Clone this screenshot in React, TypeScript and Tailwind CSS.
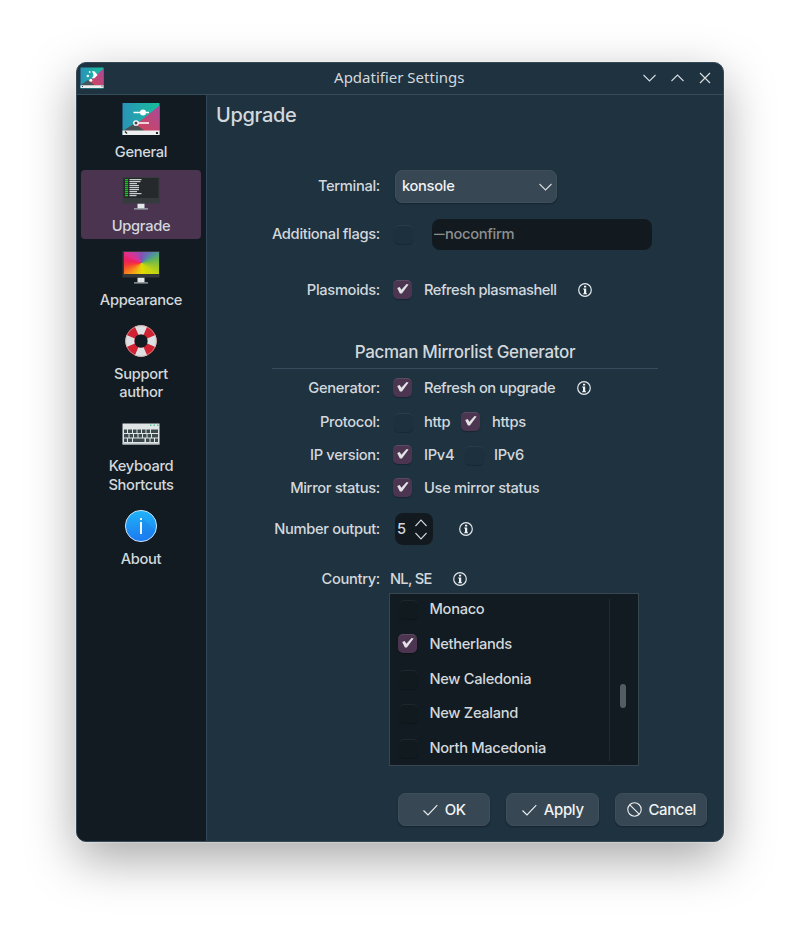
import type { ReactNode } from "react";

function GeneralIcon() {
  return (
    <svg width="40" height="46" viewBox="0 0 40 46">
      <defs>
        <linearGradient id="gBlue" x1="0" y1="0" x2="1" y2="0">
          <stop offset="0" stopColor="#2a93b8" />
          <stop offset="1" stopColor="#16bf9c" />
        </linearGradient>
        <linearGradient id="gPink" x1="0" y1="1" x2="1" y2="0">
          <stop offset="0" stopColor="#d8434f" />
          <stop offset="1" stopColor="#a54a9c" />
        </linearGradient>
      </defs>
      <rect x="1.500" y="7" width="37" height="32" fill="url(#gBlue)" />
      <path d="M38.5 9.500V35H9L17 27Z" fill="url(#gPink)" />
      <path d="M1.500 35L13.500 27.500L24 35Z" fill="#4a5154" />
      <rect x="1.500" y="34.500" width="37" height="4.500" fill="#eceeef" />
      <path d="M4 35.500l2 2" stroke="#222" strokeWidth="1.200" />
      <rect x="35" y="36" width="2" height="2" fill="#222" />
      <path d="M12.500 16.500H28M16.500 27H28" stroke="#fff" strokeWidth="1.400" />
      <circle cx="22" cy="16.500" r="3" fill="#fff" />
      <circle cx="15" cy="27" r="2.200" fill="#4a4650" stroke="#fff" strokeWidth="1.300" />
    </svg>
  );
}

function AppIcon() {
  return (
    <svg width="24" height="22" viewBox="0 0 24 22">
      <rect x="0.500" y="0.500" width="23" height="21" fill="url(#gBlue)" />
      <path d="M23.500 1.500V18.500H5L11 13Z" fill="url(#gPink)" />
      <path d="M0.500 18L8 13L15 18.500H0.500Z" fill="#44565b" />
      <rect x="0.500" y="18.300" width="23" height="2.700" fill="#eceeef" />
      <path d="M2 19l1 1M21.500 19.200h1" stroke="#333" strokeWidth="0.900" />
      <path d="M12 4.300h2.400L17.600 8L14.400 11.200H12L13.600 8Z" fill="#fff" />
      <circle cx="9.700" cy="5" r="0.900" fill="#fff" />
      <circle cx="7.800" cy="9" r="1.200" fill="#fff" />
      <circle cx="10.800" cy="13.300" r="1.500" fill="#fff" />
    </svg>
  );
}

function Stand() {
  return (
    <>
      <path d="M16.500 33.500h7v5h-7z" fill="#e3e7ea" />
      <path d="M13 38.300h14v1.200H13z" fill="#a5b1b5" />
    </>
  );
}

function TerminalIcon() {
  const widths = [12, 11, 7.500, 9.500, 9.500, 9.500, 7.500, 12, 7];
  return (
    <svg width="40" height="46" viewBox="0 0 40 46">
      <Stand />
      <rect x="1.500" y="7" width="37" height="26.500" rx="0.500" fill="#353a3d" />
      <rect x="2.500" y="8" width="35" height="20" fill="#25292b" />
      {widths.map((w, i) => (
        <g key={i}>
          <rect x="4" y={9 + i * 2} width="3" height="1.300" fill="#18c51c" />
          <rect x="8.500" y={9 + i * 2} width={w} height="1.200" fill="#c9cccd" />
        </g>
      ))}
    </svg>
  );
}

function AppearanceIcon() {
  return (
    <svg width="40" height="46" viewBox="0 0 40 46">
      <Stand />
      <rect x="1.500" y="7" width="37" height="26.500" rx="0.500" fill="#34383b" />
      <foreignObject x="2.500" y="8" width="35" height="21.500">
        <div className="h-full w-full bg-[conic-gradient(#8450b5,#5f78b0_40deg,#4f9b92_58deg,#6cb84c_80deg,#a0c82a_105deg,#c8d60e_130deg,#e0d904_170deg,#ebca0a_195deg,#f59a18_225deg,#f76a22_245deg,#f53a35_262deg,#ee1f5c_280deg,#e0308f_303deg,#b93fa6_330deg,#8450b5)]" />
      </foreignObject>
    </svg>
  );
}

function SupportIcon() {
  return (
    <svg width="40" height="46" viewBox="0 0 40 46">
      <circle cx="20" cy="23" r="11.200" fill="none" stroke="#cf2233" strokeWidth="9" />
      <circle
        cx="20"
        cy="23"
        r="11.200"
        fill="none"
        stroke="#dde1e4"
        strokeWidth="9"
        pathLength="360"
        strokeDasharray="46 44"
        strokeDashoffset="23"
      />
      <circle cx="20" cy="23" r="15.300" fill="none" stroke="#c8b6a8" strokeWidth="0.900" strokeOpacity="0.700" />
    </svg>
  );
}

function KeyboardIcon() {
  const row = (y: number, xs: [number, number][]) =>
    xs.map(([x, w]) => <rect key={`${x}-${y}`} x={x} y={y} width={w} height="3.500" fill="#3d4a4d" />);
  return (
    <svg width="40" height="46" viewBox="0 0 40 46">
      <rect x="1.500" y="12.500" width="37" height="21" fill="#dfe4e5" />
      <rect x="1.500" y="32.500" width="37" height="1" fill="#a3adaf" />
      {row(18.500, [[3, 3], [7, 4], [12, 3.500], [16.500, 3.500], [21, 3.500], [25.500, 3.500], [30, 7]])}
      {row(23, [[3, 4.500], [8.500, 3.500], [13, 3.500], [17.500, 3.500], [22, 3.500], [26.500, 3.500], [31, 6]])}
      {row(27.500, [[3, 3], [7, 4], [12, 11.500], [25, 3.500], [29.500, 3.500], [34, 3]])}
      <path d="M29 13.500h1.500v1.500H29zM32.500 13.500H34v1.500h-1.500zM36 13.500h1.500v1.500H36z" fill="#59c99a" />
    </svg>
  );
}

function AboutIcon() {
  return (
    <svg width="40" height="46" viewBox="0 0 40 46">
      <defs>
        <linearGradient id="gInfo" x1="0" y1="0" x2="0" y2="1">
          <stop offset="0" stopColor="#1fb4f8" />
          <stop offset="1" stopColor="#1c78f2" />
        </linearGradient>
      </defs>
      <circle cx="20" cy="23" r="15.600" fill="url(#gInfo)" stroke="#c3e0f6" strokeWidth="1" />
      <path d="M21 15L34 27L29 34L21 31Z" fill="#1767cc" fillOpacity="0.180" />
      <path d="M19 15h2v2h-2zM19 19h2v12h-2z" fill="#eef6fc" />
    </svg>
  );
}

function Info() {
  return (
    <svg width="14" height="14" viewBox="0 0 14 14" className="shrink-0">
      <circle cx="7" cy="7" r="6.300" fill="none" stroke="#e4e8ea" strokeWidth="1.200" />
      <path d="M6 2.800h2.200v1.700H6zM5.200 5.600h3v4.600h.8v1H5.200v-1H6V6.600h-.8z" fill="#f1f3f4" />
    </svg>
  );
}

function Check({ on = false }: { on?: boolean }) {
  if (!on) {
    return (
      <span className="ml-px mt-px block size-[19px] shrink-0 rounded-[5px] bg-black/3 shadow-[inset_0_1px_0_rgba(255,255,255,0.06),0_1px_1px_rgba(0,0,0,0.2)]" />
    );
  }
  return (
    <span className="-mt-[2px] mr-px flex size-[19px] shrink-0 items-center justify-center rounded-[5px] border-t border-white/10 bg-[#4b3550] shadow-[0_1px_1px_rgba(0,0,0,0.25)]">
      <svg width="13" height="12" viewBox="0 0 13 12" className="-mt-px">
        <path d="M1.200 4.900L3.700 3.900L5.400 6.800L10.600 1L12.600 1.400L5.900 10.500H3.900Z" fill="#e3e2e6" />
      </svg>
    </span>
  );
}

function Chevron({ up = false, w = 13 }: { up?: boolean; w?: number }) {
  return (
    <svg width={w} height="8" viewBox="0 0 13 8" preserveAspectRatio="none" fill="none" stroke="#d7dcdf" strokeWidth="1.100">
      <path d={up ? "M0.500 7L6.500 1L12.500 7" : "M0.500 1L6.500 7L12.500 1"} />
    </svg>
  );
}

function NavItem({ icon, children, active = false }: { icon: ReactNode; children: ReactNode; active?: boolean }) {
  return (
    <div className={`flex w-[120px] flex-col items-center rounded-[4px] ${active ? "bg-[#4a3450]" : ""}`}>
      {icon}
      <div className="pb-[4px] pt-[0.500px] text-center leading-[18.500px]">{children}</div>
    </div>
  );
}

function Row({ label, className, children }: { label: string; className: string; children: ReactNode }) {
  return (
    <div className={`flex items-center ${className}`}>
      <div className="w-[173px] shrink-0 text-right">{label}</div>
      {children}
    </div>
  );
}

function Country({ name, on }: { name: string; on?: boolean }) {
  return (
    <div className="flex h-[34.700px] shrink-0 items-center pl-[8px]">
      <div className="w-[31.500px]"><Check on={on} /></div>
      {name}
    </div>
  );
}

function Button({ icon, label }: { icon: ReactNode; label: string }) {
  return (
    <div className="flex h-[32.500px] w-[92.500px] items-center justify-center gap-[7px] rounded-[7px] border border-[#3f4f5a] bg-[#374753] pl-px pt-px text-[14.900px] text-[#f1f3f4] shadow-[0_1px_2px_rgba(0,0,0,0.3)]">
      {icon}
      {label}
    </div>
  );
}

const tick = (
  <svg width="15" height="12" viewBox="0 0 15 12" fill="none" stroke="#eef0f1" strokeWidth="1.100">
    <path d="M0.500 6.500L5 11L14.300 1.200" />
  </svg>
);

export default function App() {
  return (
    <div className="h-[932px] w-[800px] overflow-hidden bg-white pl-[75.500px] pt-[62px] font-['Inter',sans-serif] text-[14.700px] font-[450] tracking-[-0.022em] text-[#d3d8dc]">
      <div className="flex h-[780px] w-[648px] flex-col overflow-hidden rounded-[10px] border border-[#354a59] bg-[#1e3240] shadow-[0_0_2px_rgba(255,255,255,0.9),0_17px_50px_rgba(0,0,0,0.35)]">
        <header className="flex h-8 shrink-0 items-center border-b border-[#364c5c] pb-[2px] pl-[3.500px]">
          <AppIcon />
          <div className="ml-[52px] flex-1 text-center font-['Noto_Sans',sans-serif] text-[15px] font-normal tracking-normal">
            Apdatifier Settings
          </div>
          <div className="mr-[12px] flex items-center gap-[15px]">
            <Chevron />
            <Chevron up />
            <svg width="12" height="12" viewBox="0 0 12 12" stroke="#d7dcdf" strokeWidth="1.200">
              <path d="M1 1L11 11M11 1L1 11" />
            </svg>
          </div>
        </header>

        <div className="flex min-h-0 flex-1">
          <nav className="flex w-[130px] shrink-0 flex-col gap-[5px] border-r border-[#32485a] bg-[#121b21] pl-[4.500px] pt-px">
            <NavItem icon={<GeneralIcon />}>General</NavItem>
            <NavItem icon={<TerminalIcon />} active>Upgrade</NavItem>
            <NavItem icon={<AppearanceIcon />}>Appearance</NavItem>
            <NavItem icon={<SupportIcon />}>Support<br />author</NavItem>
            <NavItem icon={<KeyboardIcon />}>Keyboard<br />Shortcuts</NavItem>
            <NavItem icon={<AboutIcon />}>About</NavItem>
          </nav>

          <main className="flex min-w-0 flex-1 flex-col pl-[0.500px]">
            <h1 className="ml-[9px] mt-[5px] h-[30px] text-[20px] leading-[30px]">Upgrade</h1>

            <Row label="Terminal:" className="mt-[40px] h-[33px]">
              <div className="ml-[15px] flex h-[32.500px] w-[162px] items-center justify-between rounded-[7px] border border-[#3f4f5a] bg-[#374753] pl-[6px] pr-[4px] text-[#f1f3f4] shadow-[0_1px_2px_rgba(0,0,0,0.3)]">
                konsole
                <Chevron />
              </div>
            </Row>
            <Row label="Additional flags:" className="mt-[15px] h-[32px]">
              <div className="ml-[13px] w-[39px]"><Check /></div>
              <div className="flex h-[31px] w-[220px] items-center rounded-[8px] bg-[#121a20] pl-[2px] text-[#8c8f90]">
                <span className="inline-block w-[11px] origin-left scale-x-[0.720]">—</span>
                noconfirm
              </div>
            </Row>
            <Row label="Plasmoids:" className="mt-[30px] h-[20px]">
              <div className="ml-[13px] w-[31px]"><Check on /></div>
              <div className="w-[154px] tracking-[-0.032em]">Refresh plasmashell</div>
              <Info />
            </Row>

            <h2 className="ml-[65px] mt-[40px] h-[29px] w-[386px] border-b border-[#364c5c] text-center text-[17px] leading-[24px]">
              Pacman Mirrorlist Generator
            </h2>

            <Row label="Generator:" className="mt-[9px] h-[20px]">
              <div className="ml-[13px] w-[31px]"><Check on /></div>
              <div className="w-[153px] tracking-[-0.028em]">Refresh on upgrade</div>
              <Info />
            </Row>
            <Row label="Protocol:" className="mt-[14px] h-[20px]">
              <div className="ml-[13px] w-[31px]"><Check /></div>
              <div className="w-[37px]">http</div>
              <div className="w-[31px]"><Check on /></div>
              https
            </Row>
            <Row label="IP version:" className="mt-[13px] h-[20px]">
              <div className="ml-[13px] w-[31px]"><Check on /></div>
              <div className="w-[40px]">IPv4</div>
              <div className="w-[30px]"><Check /></div>
              IPv6
            </Row>
            <Row label="Mirror status:" className="mt-[13px] h-[20px]">
              <div className="ml-[13px] w-[31px]"><Check on /></div>
              Use mirror status
            </Row>
            <Row label="Number output:" className="mt-[15px] h-[32px]">
              <div className="ml-[15px] flex h-[31.500px] w-[37.500px] items-center justify-between rounded-[8px] bg-[#121a20] pl-[2px] pr-[6px]">
                5
                <div className="flex flex-col gap-[5px]">
                  <Chevron up w={12} />
                  <Chevron w={12} />
                </div>
              </div>
              <div className="ml-[26px]"><Info /></div>
            </Row>
            <Row label="Country:" className="mt-[24px] h-[20px]">
              <div className="ml-[10px] w-[63px] tracking-[-0.050em]">NL, SE</div>
              <Info />
            </Row>

            <div className="ml-[182px] mt-[4px] flex h-[173px] w-[250px] overflow-hidden border border-[#38464f] bg-[#121b21]">
              <div className="-mt-[2px] flex flex-1 flex-col">
                <Country name="Monaco" />
                <Country name="Netherlands" on />
                <Country name="New Caledonia" />
                <Country name="New Zealand" />
                <Country name="North Macedonia" />
              </div>
              <div className="mt-[5px] flex h-[162px] w-[29px] border-l border-[#1f2b33] pl-[10px] pt-[85px]">
                <div className="h-[24px] w-[5.500px] rounded-full bg-[#535d63]" />
              </div>
            </div>

            <div className="mr-[15.500px] mt-[27px] flex justify-end gap-[16px]">
              <Button icon={tick} label="OK" />
              <Button icon={tick} label="Apply" />
              <Button
                icon={
                  <svg width="15" height="15" viewBox="0 0 15 15" fill="none" stroke="#eef0f1" strokeWidth="1.100">
                    <circle cx="7.500" cy="7.500" r="6.700" />
                    <path d="M2.800 2.800L12.200 12.200" />
                  </svg>
                }
                label="Cancel"
              />
            </div>
          </main>
        </div>
      </div>
    </div>
  );
}
